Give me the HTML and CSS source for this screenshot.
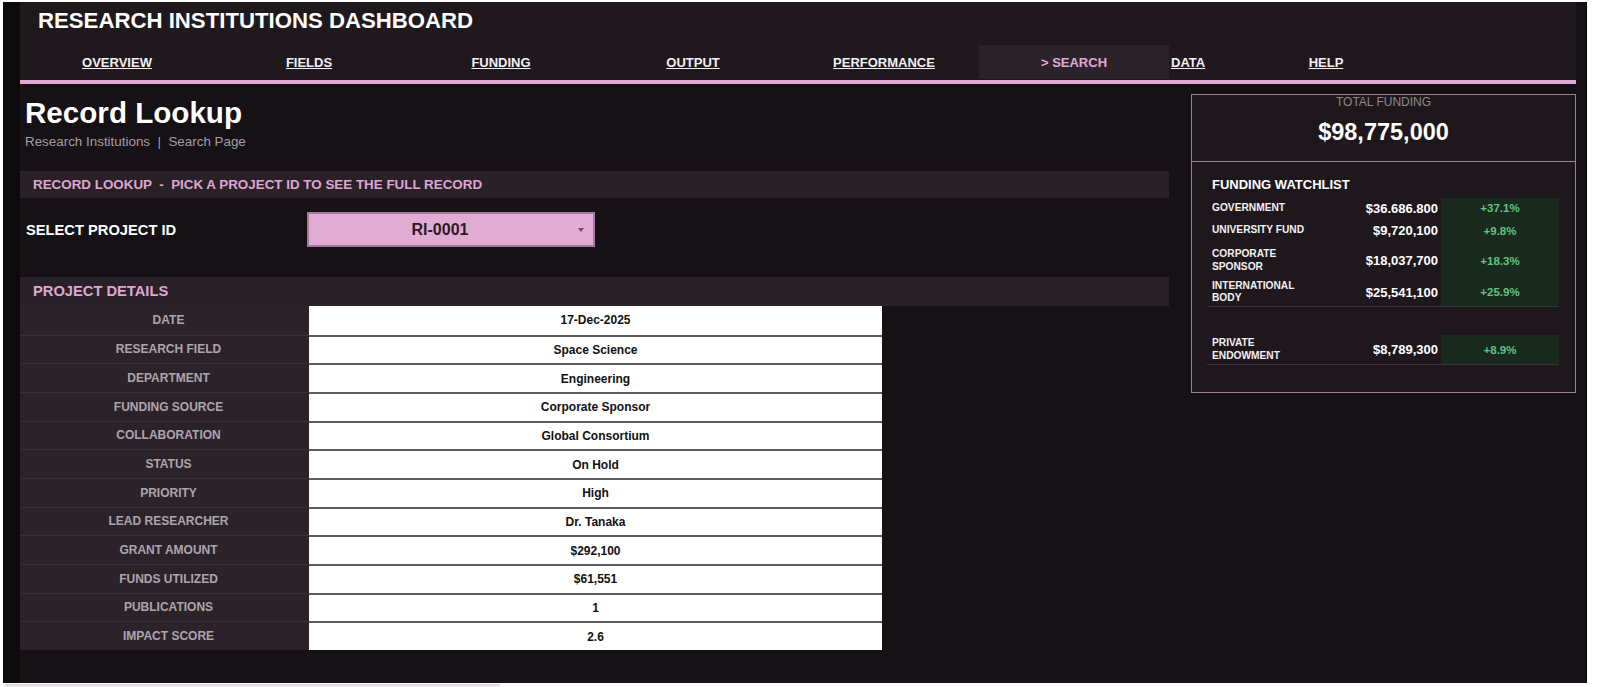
FILE: index.html
```html
<!DOCTYPE html>
<html lang="en">
<head>
    <meta charset="UTF-8">
    <meta name="viewport" content="width=device-width, initial-scale=1.0">
    <title>Research Institutions Dashboard - Search</title>
    <link rel="stylesheet" href="styles.css">
</head>
<body>

    <div class="sheet">
        <div class="gutter"></div>

        <div class="board">
            <!-- Title and navigation -->
            <header class="topbar">
                <h1 class="title">RESEARCH INSTITUTIONS DASHBOARD</h1>
                <nav class="nav">
                    <a class="nav-item w192" href="#">OVERVIEW</a>
                    <a class="nav-item w192" href="#">FIELDS</a>
                    <a class="nav-item w192" href="#">FUNDING</a>
                    <a class="nav-item w192" href="#">OUTPUT</a>
                    <a class="nav-item w190" href="#">PERFORMANCE</a>
                    <span class="nav-item active">&gt; SEARCH</span>
                    <a class="nav-item data" href="#">DATA</a>
                    <a class="nav-item help" href="#">HELP</a>
                </nav>
            </header>
            <div class="accent"></div>

            <div class="content">
                <!-- Lookup side -->
                <section class="lookup">
                    <h2 class="page-title">Record Lookup</h2>
                    <p class="crumbs">Research Institutions  |  Search Page</p>

                    <div class="bar">RECORD LOOKUP  -  PICK A PROJECT ID TO SEE THE FULL RECORD</div>

                    <div class="picker">
                        <label class="picker-label" for="projectId">SELECT PROJECT ID</label>
                        <div class="select" id="projectId">
                            <span class="select-value">RI-0001</span>
                            <span class="caret"></span>
                        </div>
                    </div>

                    <div class="bar bar-lg">PROJECT DETAILS</div>

                    <div class="details">
                        <div class="key">DATE</div><div class="val">17-Dec-2025</div>
                        <div class="key">RESEARCH FIELD</div><div class="val">Space Science</div>
                        <div class="key">DEPARTMENT</div><div class="val">Engineering</div>
                        <div class="key">FUNDING SOURCE</div><div class="val">Corporate Sponsor</div>
                        <div class="key">COLLABORATION</div><div class="val">Global Consortium</div>
                        <div class="key">STATUS</div><div class="val">On Hold</div>
                        <div class="key">PRIORITY</div><div class="val">High</div>
                        <div class="key">LEAD RESEARCHER</div><div class="val">Dr. Tanaka</div>
                        <div class="key">GRANT AMOUNT</div><div class="val">$292,100</div>
                        <div class="key">FUNDS UTILIZED</div><div class="val">$61,551</div>
                        <div class="key">PUBLICATIONS</div><div class="val">1</div>
                        <div class="key">IMPACT SCORE</div><div class="val">2.6</div>
                    </div>
                </section>

                <!-- Funding summary card -->
                <aside class="card">
                    <div class="total">
                        <div class="total-label">TOTAL FUNDING</div>
                        <div class="total-value">$98,775,000</div>
                    </div>

                    <div class="watch">
                        <div class="watch-title">FUNDING WATCHLIST</div>

                        <div class="watch-row r1">
                            <div class="w-name">GOVERNMENT</div>
                            <div class="w-amt">$36.686.800</div>
                            <div class="w-pct">+37.1%</div>
                        </div>
                        <div class="watch-row r2">
                            <div class="w-name">UNIVERSITY FUND</div>
                            <div class="w-amt">$9,720,100</div>
                            <div class="w-pct">+9.8%</div>
                        </div>
                        <div class="watch-row r3">
                            <div class="w-name">CORPORATE<br>SPONSOR</div>
                            <div class="w-amt">$18,037,700</div>
                            <div class="w-pct">+18.3%</div>
                        </div>
                        <div class="watch-row r4 ruled">
                            <div class="w-name">INTERNATIONAL<br>BODY</div>
                            <div class="w-amt">$25,541,100</div>
                            <div class="w-pct">+25.9%</div>
                        </div>

                        <div class="watch-gap"></div>

                        <div class="watch-row r5 ruled">
                            <div class="w-name">PRIVATE<br>ENDOWMENT</div>
                            <div class="w-amt">$8,789,300</div>
                            <div class="w-pct">+8.9%</div>
                        </div>
                    </div>
                </aside>
            </div>
        </div>
    </div>

    <div class="hscroll"></div>

</body>
</html>
```

FILE: styles.css
```css
body {
    margin: 0;
    padding: 0;
    background-color: #ffffff;
    font-family: "Liberation Sans", Arial, sans-serif;
}

.sheet {
    display: flex;
    width: 1584px;
    height: 681px;
    margin: 2px 0 0 3px;
    background-color: #151115;
}

.gutter {
    width: 17px;
    background-color: #0c0a0b;
}

.board {
    flex: 1;
    border-right: 1px solid #000;
}

/* header band */
.topbar {
    width: 1556px;
    height: 78px;
    padding-top: 6px;
    box-sizing: border-box;
    background-color: #1f191e;
}

.title {
    margin: 0;
    padding-left: 18px;
    font-size: 22.2px;
    line-height: 26px;
    font-weight: bold;
    color: #ffffff;
}

.nav {
    display: flex;
    height: 34px;
    margin-top: 11px;
    padding-left: 1px;
}

.nav-item {
    display: flex;
    align-items: center;
    justify-content: center;
    font-size: 13px;
    font-weight: bold;
    color: #f3eff2;
    text-decoration: underline;
}

.w192 { width: 192px; }
.w190 { width: 190px; }

.nav-item.active {
    width: 190px;
    background-color: #2c232a;
    color: #e2a9d5;
    text-decoration: none;
}

.nav-item.data {
    width: 117px;
    justify-content: flex-start;
    padding-left: 2px;
}

.nav-item.help {
    width: 76px;
}

.accent {
    width: 1556px;
    height: 4px;
    background-color: #dfa9d3;
}

/* main area */
.content {
    display: flex;
    align-items: flex-start;
}

.lookup {
    width: 1149px;
}

.page-title {
    margin: 13px 0 0 5px;
    font-size: 29.6px;
    line-height: 32px;
    font-weight: bold;
    color: #ffffff;
}

.crumbs {
    margin: 5px 0 0 5px;
    font-size: 13.4px;
    line-height: 16px;
    color: #a59da4;
    white-space: pre;
}

.bar {
    height: 27px;
    margin-top: 21px;
    padding-left: 13px;
    background-color: #2a2128;
    color: #dea7d1;
    font-size: 13.4px;
    font-weight: bold;
    line-height: 27px;
    white-space: pre;
}

.bar-lg {
    height: 29px;
    margin-top: 30px;
    font-size: 14.7px;
    line-height: 29px;
}

.picker {
    display: flex;
    align-items: center;
    margin-top: 14px;
}

.picker-label {
    width: 281px;
    padding-left: 6px;
    font-size: 14.7px;
    font-weight: bold;
    color: #ffffff;
}

.select {
    position: relative;
    display: flex;
    align-items: center;
    justify-content: center;
    width: 288px;
    height: 35px;
    box-sizing: border-box;
    padding-right: 22px;
    border: 2px solid #a7779d;
    background-color: #e1acd4;
}

.select-value {
    font-size: 16px;
    font-weight: bold;
    color: #2a1a26;
}

.caret {
    position: absolute;
    right: 9px;
    top: 14px;
    border-left: 3px solid transparent;
    border-right: 3px solid transparent;
    border-top: 4px solid #8b3d7b;
}

/* record table */
.details {
    display: grid;
    grid-template-columns: 289px 573px;
    grid-auto-rows: 28.67px;
    width: 862px;
}

.key,
.val {
    display: flex;
    align-items: center;
    justify-content: center;
    font-size: 12px;
    font-weight: bold;
}

.key {
    padding-left: 8px;
    background-color: #2b2329;
    color: #ada5ac;
    border-top: 1px solid #3a3138;
}

.val {
    background-color: #ffffff;
    color: #111111;
    border-top: 2px solid #5c5c5c;
}

.key:first-child,
.key:first-child + .val {
    border-top: none;
}

/* funding card */
.card {
    width: 385px;
    height: 299px;
    box-sizing: border-box;
    margin: 10px 0 0 22px;
    border: 1px solid #9e7f98;
    background-color: #1e181d;
}

.total {
    height: 66px;
    border-bottom: 1px solid #9e7f98;
    text-align: center;
}

.total-label {
    font-size: 12px;
    line-height: 14px;
    color: #8e878d;
}

.total-value {
    margin-top: 9px;
    font-size: 23.5px;
    line-height: 28px;
    font-weight: bold;
    color: #ffffff;
}

.watch {
    padding: 0 16px 0 15px;
}

.watch-title {
    margin: 15px 0 5px 5px;
    font-size: 13px;
    line-height: 16px;
    font-weight: bold;
    color: #ffffff;
}

.watch-row {
    display: grid;
    grid-template-columns: 123px 111px 118px;
}

.r1 { height: 20px; }
.r2 { height: 25px; }
.r3 { height: 35px; }
.r4 { height: 28px; }
.r5 { height: 29px; }

.watch-row.ruled {
    border-bottom: 1px solid #3a3239;
}

.watch-gap {
    height: 28px;
}

.w-name,
.w-amt,
.w-pct {
    display: flex;
    align-items: center;
    font-weight: bold;
}

.w-name {
    padding-left: 5px;
    font-size: 10.2px;
    line-height: 12.5px;
    color: #f4f0f3;
}

.w-amt {
    justify-content: flex-end;
    padding-right: 3px;
    font-size: 13px;
    color: #ffffff;
}

.w-pct {
    justify-content: center;
    background-color: #1b2a1f;
    font-size: 11.5px;
    color: #5fc47b;
}

.hscroll {
    width: 495px;
    height: 3px;
    margin: 1px 0 0 5px;
    border-top: 1px solid #d4d4d4;
    background-color: #e6e6e6;
}
```
